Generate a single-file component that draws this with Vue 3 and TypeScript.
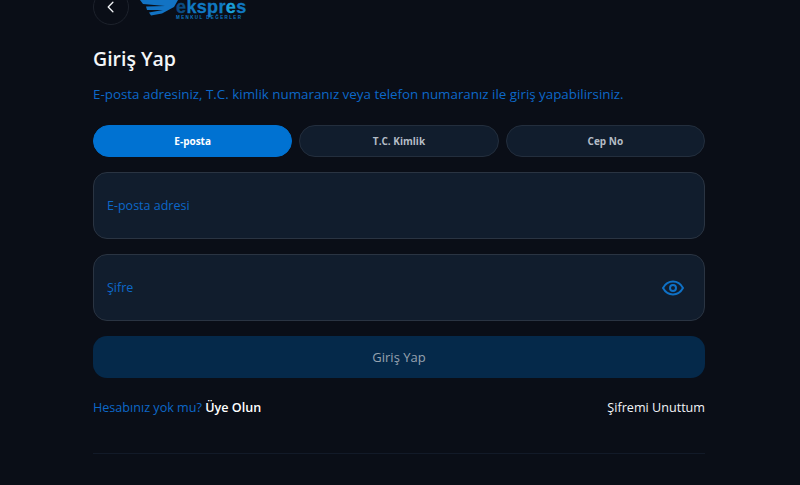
<script setup lang="ts">
const tabs: string[] = ['E-posta', 'T.C. Kimlik', 'Cep No']
</script>

<template>
  <div class="page">
    <header class="top">
      <button class="back" aria-label="Geri">
        <svg width="12" height="12" viewBox="0 0 12 12" fill="none"><path d="M7.9 1.2 3.2 6l4.700 4.800" stroke="#f2f4f7" stroke-width="1.3" stroke-linecap="round" stroke-linejoin="round"/></svg>
      </button>
      <div class="logo">
        <svg class="wing" width="42" height="20" viewBox="0 0 42 20">
          <path d="M0 0H38L34 7 22 13.500 11 15.500 9 12.500 23 10 7 10 6 6.500 25 6 3 4Z" fill="#1273c4"/>
        </svg>
        <div class="brand">
          <span class="word"><i>e</i>kspr<b>e</b>s</span>
          <span class="sub">MENKUL DEĞERLER</span>
        </div>
      </div>
    </header>

    <h1>Giriş Yap</h1>
    <p class="desc">E-posta adresiniz, T.C. kimlik numaranız veya telefon numaranız ile giriş yapabilirsiniz.</p>

    <div class="tabs">
      <div v-for="(t, i) in tabs" :key="t" class="tab" :class="{ active: i === 0 }">{{ t }}</div>
    </div>

    <div class="field"><span>E-posta adresi</span></div>
    <div class="field">
      <span>Şifre</span>
      <svg width="24" height="24" viewBox="0 0 24 24" fill="none" stroke="#0f71c6" stroke-width="2" stroke-linejoin="round">
        <path d="M2 12C4.500 7.600 8 5.600 12 5.600s7.500 2 10 6.400c-2.500 4.400-6 6.400-10 6.400S4.500 16.400 2 12Z"/>
        <circle cx="12" cy="12" r="3"/>
      </svg>
    </div>

    <button class="submit">Giriş Yap</button>

    <div class="links">
      <span class="ask">Hesabınız yok mu? <strong>Üye Olun</strong></span>
      <span class="forgot">Şifremi Unuttum</span>
    </div>

    <div class="rule"></div>
  </div>
</template>

<style>
html, body { margin: 0; background: #0a0e17; overflow: hidden; }
</style>

<style scoped>
.page {
  box-sizing: border-box;
  width: 800px;
  height: 485px;
  padding: 0 95px 0 93px;
  background: #0a0e17;
  font-family: "Open Sans", "Noto Sans", sans-serif;
  overflow: hidden;
}
.top { display: flex; align-items: flex-start; gap: 11px; margin-top: -11px; height: 36px; }
.back {
  box-sizing: border-box;
  width: 36px; height: 36px; padding: 0;
  display: flex; align-items: center; justify-content: center;
  border: 1px solid #1d222c; border-radius: 50%;
  background: transparent;
}
.logo { display: flex; margin-top: 11px; height: 22px; }
.wing { margin-right: -6px; }
.brand { display: flex; flex-direction: column; }
.word {
  font-family: "Liberation Sans", sans-serif;
  font-weight: 700; font-size: 18px; line-height: 16px; letter-spacing: 0.35px;
  color: #1078c0; margin-top: -1px; white-space: nowrap;
  -webkit-text-stroke: 0.3px currentColor;
}
.word i { font-style: normal; color: #0b4a80; }
.word b { color: #1aa0d8; font-weight: 700; }
.sub {
  font-family: "Liberation Sans", sans-serif;
  font-weight: 700; font-size: 4.500px; line-height: 6px; letter-spacing: 1.400px;
  color: #1078c0; white-space: nowrap;
}
h1 {
  margin: 0; padding-top: 19px;
  font-size: 19.500px; line-height: 30px; font-weight: 600; color: #f4f6f8;
}
.desc {
  margin: 10px 0 0; font-size: 13.370px; line-height: 20px; color: #0d68c8; white-space: nowrap;
}
.tabs { display: grid; grid-template-columns: repeat(3, 1fr); gap: 7px; margin-top: 21px; }
.tab {
  box-sizing: border-box;
  height: 32px; display: flex; align-items: center; justify-content: center;
  border: 1px solid #232e3d; border-radius: 16px;
  background: #111d2d;
  font-size: 10px; font-weight: 700; color: #b4bcc6;
}
.tab.active { background: #0072d2; border-color: #0072d2; color: #fff; }
.field {
  box-sizing: border-box;
  height: 67px; margin-top: 15px; padding: 0 19px 0 13px;
  display: flex; align-items: center; justify-content: space-between;
  border: 1px solid #2a3442; border-radius: 14px;
  background: #111d2d;
  font-size: 12.500px; color: #0d68c8;
}
.submit {
  display: block; box-sizing: border-box; width: 100%; height: 42px; margin-top: 15px;
  border: 0; border-radius: 14px;
  background: #05294a;
  font-family: inherit; font-size: 13px; color: #95a2b0;
}
.links {
  display: flex; justify-content: space-between; align-items: center;
  margin-top: 19px; height: 20px; font-size: 12.600px;
}
.ask { color: #0d68c8; }
.ask strong { color: #fff; font-weight: 600; }
.forgot { color: #f2f4f7; }
.rule { height: 1px; margin-top: 36px; background: #121a28; }
</style>
